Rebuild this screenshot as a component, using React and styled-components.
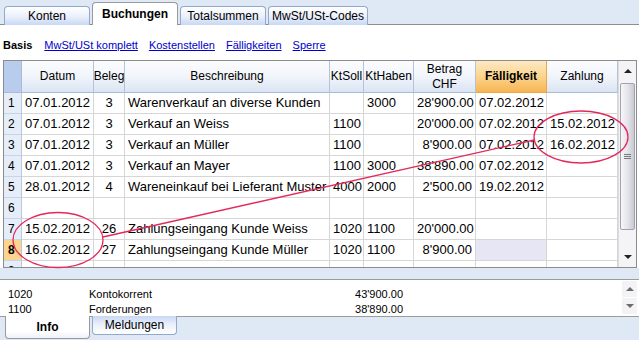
import React from "react";
import styled, { createGlobalStyle, css } from "styled-components";

const GlobalStyle = createGlobalStyle`
  html, body {
    margin: 0;
    padding: 0;
    width: 639px;
    height: 340px;
    overflow: hidden;
    background: #dfe9f5;
    font-family: "Liberation Sans", Arial, sans-serif;
  }
`;

const COLS = "18px 72px 31px 205px 34px 50px 62px 71px 71px";

const columns = [
  { key: "nr" },
  { key: "datum", label: "Datum", align: "left" },
  { key: "beleg", label: "Beleg", align: "center" },
  { key: "text", label: "Beschreibung", align: "left" },
  { key: "soll", label: "KtSoll", align: "left" },
  { key: "haben", label: "KtHaben", align: "left" },
  { key: "betrag", label: "Betrag\nCHF", align: "right" },
  { key: "faellig", label: "Fälligkeit", align: "left", active: true },
  { key: "zahlung", label: "Zahlung", align: "left" },
];

const rows = [
  { datum: "07.01.2012", beleg: "3", text: "Warenverkauf an diverse Kunden", soll: "", haben: "3000", betrag: "28'900.00", faellig: "07.02.2012", zahlung: "" },
  { datum: "07.01.2012", beleg: "3", text: "Verkauf an Weiss", soll: "1100", haben: "", betrag: "20'000.00", faellig: "07.02.2012", zahlung: "15.02.2012" },
  { datum: "07.01.2012", beleg: "3", text: "Verkauf an Müller", soll: "1100", haben: "", betrag: "8'900.00", faellig: "07.02.2012", zahlung: "16.02.2012" },
  { datum: "07.01.2012", beleg: "3", text: "Verkauf an Mayer", soll: "1100", haben: "3000", betrag: "38'890.00", faellig: "07.02.2012", zahlung: "" },
  { datum: "28.01.2012", beleg: "4", text: "Wareneinkauf bei Lieferant Muster", soll: "4000", haben: "2000", betrag: "2'500.00", faellig: "19.02.2012", zahlung: "" },
  {},
  { datum: "15.02.2012", beleg: "26", text: "Zahlungseingang Kunde Weiss", soll: "1020", haben: "1100", betrag: "20'000.00", faellig: "", zahlung: "" },
  { datum: "16.02.2012", beleg: "27", text: "Zahlungseingang Kunde Müller", soll: "1020", haben: "1100", betrag: "8'900.00", faellig: "", zahlung: "", current: true },
  {},
];

const infoRows = [
  { nr: "1020", name: "Kontokorrent", amount: "43'900.00" },
  { nr: "1100", name: "Forderungen", amount: "38'890.00" },
];

export default function App() {
  return (
    <>
      <GlobalStyle />
      <Page>
        <TabBar>
          <Tab>Konten</Tab>
          <Tab $active>Buchungen</Tab>
          <Tab>Totalsummen</Tab>
          <Tab $wide>MwSt/USt-Codes</Tab>
        </TabBar>

        <Main>
          <Views>
            <ViewLabel>Basis</ViewLabel>
            <ViewLink>MwSt/USt komplett</ViewLink>
            <ViewLink>Kostenstellen</ViewLink>
            <ViewLink>Fälligkeiten</ViewLink>
            <ViewLink>Sperre</ViewLink>
          </Views>

          <GridBox>
            <Table>
              <HeaderRow>
                {columns.map((c) =>
                  c.key === "nr" ? (
                    <Corner key={c.key} />
                  ) : (
                    <HeadCell key={c.key} $active={c.active}>
                      {c.label}
                    </HeadCell>
                  )
                )}
              </HeaderRow>
              {rows.map((r, i) => (
                <DataRow key={i}>
                  <RowNum $current={r.current}>{i + 1}</RowNum>
                  {columns.slice(1).map((c) => (
                    <Cell
                      key={c.key}
                      $align={c.align}
                      $selected={r.current && c.key === "faellig"}
                    >
                      {r[c.key] || ""}
                    </Cell>
                  ))}
                </DataRow>
              ))}
            </Table>
            <VScroll>
              <ScrollButton>
                <Arrow $up />
              </ScrollButton>
              <Track>
                <Thumb>
                  <Grip />
                </Thumb>
              </Track>
              <ScrollButton>
                <Arrow />
              </ScrollButton>
            </VScroll>
          </GridBox>
        </Main>

        <InfoPanel>
          <InfoList>
            {infoRows.map((r) => (
              <InfoRow key={r.nr}>
                <span>{r.nr}</span>
                <span>{r.name}</span>
                <Amount>{r.amount}</Amount>
              </InfoRow>
            ))}
          </InfoList>
          <SmallScroll>
            <SmallButton>
              <Arrow $up $light />
            </SmallButton>
            <SmallButton>
              <Arrow $light />
            </SmallButton>
          </SmallScroll>
        </InfoPanel>

        <BottomTabs>
          <BottomTab $active>Info</BottomTab>
          <BottomTab>Meldungen</BottomTab>
        </BottomTabs>

        <Marks width="639" height="340" viewBox="0 0 639 340">
          <ellipse cx="581" cy="137" rx="47" ry="26" fill="none" stroke="#e4285a" strokeWidth="1.3" />
          <ellipse cx="58" cy="240" rx="45" ry="27.5" fill="none" stroke="#e4285a" strokeWidth="1.3" />
          <line x1="103" y1="237" x2="534" y2="140" stroke="#e4285a" strokeWidth="1.4" />
        </Marks>
      </Page>
    </>
  );
}

const Page = styled.div`
  position: relative;
  width: 639px;
  height: 340px;
  display: flex;
  flex-direction: column;
  background: #dfe9f5;
`;

const TabBar = styled.div`
  height: 24px;
  border-bottom: 1px solid #8e8e8e;
  display: flex;
  align-items: flex-end;
  padding-left: 4px;
  gap: 2px;
`;

const Tab = styled.div`
  box-sizing: border-box;
  width: ${(p) => (p.$wide ? "100px" : "86px")};
  height: 19px;
  margin-bottom: -1px;
  border: 1px solid #93a9cb;
  border-bottom: none;
  border-radius: 4px 4px 0 0;
  background: linear-gradient(#ffffff, #e9effb 55%, #c8d7f3);
  display: flex;
  align-items: center;
  justify-content: center;
  font-size: 12px;
  color: #000;
  ${(p) =>
    p.$active &&
    css`
      height: 23px;
      width: 86px;
      border-color: #9a9a9a;
      background: #fff;
      font-weight: bold;
      position: relative;
      z-index: 1;
      padding-bottom: 1px;
    `}
`;

const Main = styled.div`
  background: #fff;
  height: 243px;
  padding-left: 3px;
  display: flex;
  flex-direction: column;
`;

const Views = styled.div`
  height: 35px;
  box-sizing: border-box;
  padding-top: 14px;
  display: flex;
  gap: 11px;
  font-size: 11px;
`;

const ViewLabel = styled.span`
  font-weight: bold;
  color: #000;
  margin-right: 1px;
`;

const ViewLink = styled.span`
  color: #0000cc;
  text-decoration: underline;
`;

const GridBox = styled.div`
  width: 632px;
  height: 206px;
  border: 1px solid #8c8c8c;
  display: flex;
  overflow: hidden;
`;

const Table = styled.div`
  width: 614px;
  display: flex;
  flex-direction: column;
`;

const HeaderRow = styled.div`
  display: grid;
  grid-template-columns: ${COLS};
  height: 32px;
  flex: none;
`;

const Corner = styled.div`
  background: #b8cdee;
  border-right: 1px solid #a9bbd6;
  border-bottom: 1px solid #a9bbd6;
`;

const HeadCell = styled.div`
  box-sizing: border-box;
  border-right: 1px solid #b4c3da;
  border-bottom: 1px solid #a9bbd6;
  background: linear-gradient(#fbfcfe, #f1f5fb 50%, #dae4f2);
  display: flex;
  align-items: center;
  justify-content: center;
  text-align: center;
  white-space: pre-line;
  font-size: 12px;
  line-height: 15px;
  color: #000;
  ${(p) =>
    p.$active &&
    css`
      background: linear-gradient(#fde9c4, #fcd48e 50%, #f6b552);
      border-right-color: #e9a94a;
      border-bottom-color: #e9a94a;
      font-weight: bold;
    `}
`;

const DataRow = styled.div`
  display: grid;
  grid-template-columns: ${COLS};
  height: 21px;
  flex: none;
`;

const RowNum = styled.div`
  box-sizing: border-box;
  background: ${(p) => (p.$current ? "#fcd38f" : "#e5edf8")};
  border-right: 1px solid #b8c7dc;
  border-bottom: 1px solid #c9d5e6;
  font-size: 12px;
  font-weight: ${(p) => (p.$current ? "bold" : "normal")};
  padding-left: 4px;
  line-height: 20px;
  color: #000;
`;

const Cell = styled.div`
  box-sizing: border-box;
  border-right: 1px solid #d6d6d6;
  border-bottom: 1px solid #d6d6d6;
  background: ${(p) => (p.$selected ? "#e6e6f5" : "#fff")};
  font-size: 13px;
  line-height: 20px;
  padding: 0 3px;
  white-space: nowrap;
  overflow: hidden;
  text-align: ${(p) => p.$align};
  color: #000;
`;

const VScroll = styled.div`
  width: 18px;
  display: flex;
  flex-direction: column;
  background: #f4f4f6;
  border-left: 1px solid #dcdcdc;
`;

const ScrollButton = styled.div`
  height: 20px;
  display: flex;
  align-items: center;
  justify-content: center;
`;

const Arrow = styled.div`
  width: 0;
  height: 0;
  border-left: 4px solid transparent;
  border-right: 4px solid transparent;
  ${(p) =>
    p.$up
      ? css`border-bottom: 4px solid ${p.$light ? "#6c6c6c" : "#222"};`
      : css`border-top: 4px solid ${p.$light ? "#6c6c6c" : "#222"};`}
`;

const Track = styled.div`
  flex: 1;
  padding: 2px 1px 17px 1px;
  display: flex;
`;

const Thumb = styled.div`
  flex: 1;
  border: 1px solid #a3a3ad;
  border-radius: 2px;
  background: linear-gradient(90deg, #f7f7f9, #e4e4ea 50%, #c9c9d3);
  display: flex;
  align-items: center;
  justify-content: center;
`;

const Grip = styled.div`
  width: 7px;
  height: 5px;
  background: repeating-linear-gradient(#7a7a7a 0 1px, transparent 1px 2px);
`;

const InfoPanel = styled.div`
  margin-top: 11px;
  height: 36px;
  background: #fff;
  border-top: 1px solid #9c9c9c;
  border-bottom: 1px solid #9c9c9c;
  display: flex;
  justify-content: space-between;
`;

const InfoList = styled.div`
  padding-top: 7px;
  padding-left: 8px;
  display: flex;
  flex-direction: column;
`;

const InfoRow = styled.div`
  display: grid;
  grid-template-columns: 81px 150px 164px;
  height: 15px;
  font-size: 11px;
  line-height: 15px;
  color: #000;
`;

const Amount = styled.span`
  text-align: right;
`;

const SmallScroll = styled.div`
  width: 15px;
  margin: 1px 2px 0 0;
  display: flex;
  flex-direction: column;
  gap: 1px;
`;

const SmallButton = styled.div`
  height: 16px;
  background: #f3f3f5;
  display: flex;
  align-items: center;
  justify-content: center;
`;

const BottomTabs = styled.div`
  display: flex;
  align-items: flex-start;
  gap: 2px;
  padding-left: 5px;
  margin-top: -1px;
`;

const BottomTab = styled.div`
  box-sizing: border-box;
  width: 85px;
  height: 19px;
  border: 1px solid #93a9cb;
  border-top: none;
  border-radius: 0 0 4px 4px;
  background: linear-gradient(#c8d7f3, #e9effb 45%, #ffffff);
  display: flex;
  align-items: center;
  justify-content: center;
  font-size: 12px;
  color: #000;
  ${(p) =>
    p.$active &&
    css`
      height: 23px;
      border-color: #9a9a9a;
      background: linear-gradient(#ffffff 70%, #edf1fa);
      font-weight: bold;
      position: relative;
      z-index: 1;
    `}
`;

const Marks = styled.svg`
  position: absolute;
  left: 0;
  top: 0;
  pointer-events: none;
`;
